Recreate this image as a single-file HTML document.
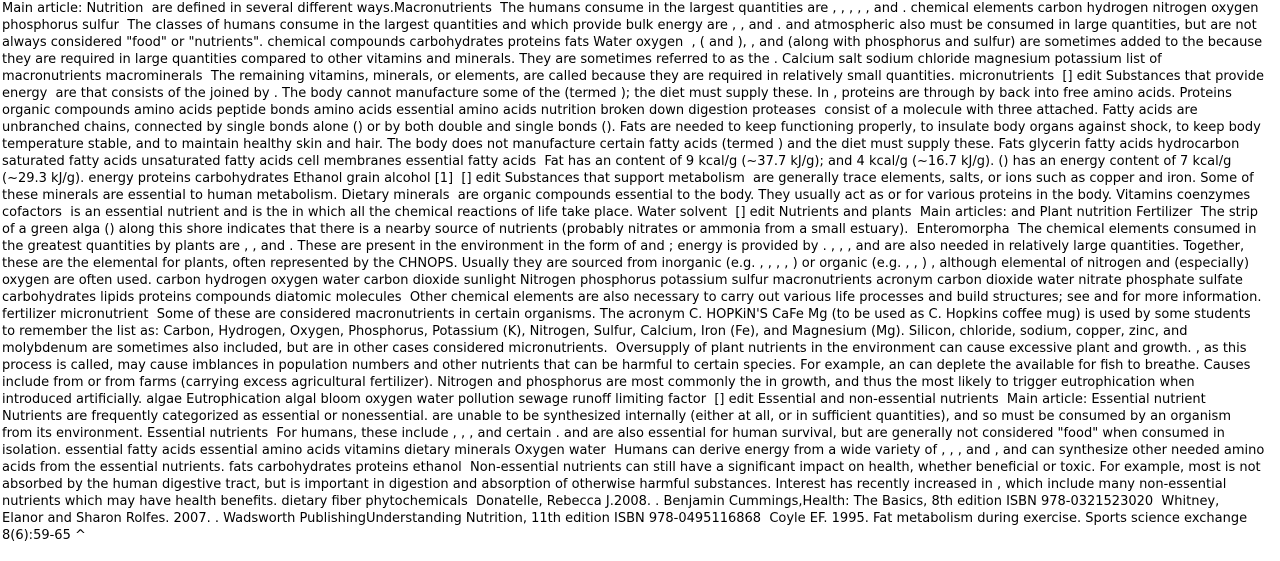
<!DOCTYPE html>
<html><head><meta charset="utf-8"><style>
html,body{margin:0;padding:0;background:#fff;overflow:hidden;}
body{font-family:"DejaVu Sans",sans-serif;font-size:13px;line-height:17px;color:#000;padding:0 2px;}
div{white-space:pre;}
</style></head><body>
<div>Main article: Nutrition  are defined in several different ways.Macronutrients  The humans consume in the largest quantities are , , , , , and . chemical elements carbon hydrogen nitrogen oxygen</div>
<div>phosphorus sulfur  The classes of humans consume in the largest quantities and which provide bulk energy are , , and . and atmospheric also must be consumed in large quantities, but are not</div>
<div>always considered "food" or "nutrients". chemical compounds carbohydrates proteins fats Water oxygen  , ( and ), , and (along with phosphorus and sulfur) are sometimes added to the because</div>
<div>they are required in large quantities compared to other vitamins and minerals. They are sometimes referred to as the . Calcium salt sodium chloride magnesium potassium list of</div>
<div>macronutrients macrominerals  The remaining vitamins, minerals, or elements, are called because they are required in relatively small quantities. micronutrients  [] edit Substances that provide</div>
<div>energy  are that consists of the joined by . The body cannot manufacture some of the (termed ); the diet must supply these. In , proteins are through by back into free amino acids. Proteins</div>
<div>organic compounds amino acids peptide bonds amino acids essential amino acids nutrition broken down digestion proteases  consist of a molecule with three attached. Fatty acids are</div>
<div>unbranched chains, connected by single bonds alone () or by both double and single bonds (). Fats are needed to keep functioning properly, to insulate body organs against shock, to keep body</div>
<div>temperature stable, and to maintain healthy skin and hair. The body does not manufacture certain fatty acids (termed ) and the diet must supply these. Fats glycerin fatty acids hydrocarbon</div>
<div>saturated fatty acids unsaturated fatty acids cell membranes essential fatty acids  Fat has an content of 9 kcal/g (~37.7 kJ/g); and 4 kcal/g (~16.7 kJ/g). () has an energy content of 7 kcal/g</div>
<div>(~29.3 kJ/g). energy proteins carbohydrates Ethanol grain alcohol [1]  [] edit Substances that support metabolism  are generally trace elements, salts, or ions such as copper and iron. Some of</div>
<div>these minerals are essential to human metabolism. Dietary minerals  are organic compounds essential to the body. They usually act as or for various proteins in the body. Vitamins coenzymes</div>
<div>cofactors  is an essential nutrient and is the in which all the chemical reactions of life take place. Water solvent  [] edit Nutrients and plants  Main articles: and Plant nutrition Fertilizer  The strip</div>
<div>of a green alga () along this shore indicates that there is a nearby source of nutrients (probably nitrates or ammonia from a small estuary).  Enteromorpha  The chemical elements consumed in</div>
<div>the greatest quantities by plants are , , and . These are present in the environment in the form of and ; energy is provided by . , , , and are also needed in relatively large quantities. Together,</div>
<div>these are the elemental for plants, often represented by the CHNOPS. Usually they are sourced from inorganic (e.g. , , , , ) or organic (e.g. , , ) , although elemental of nitrogen and (especially)</div>
<div>oxygen are often used. carbon hydrogen oxygen water carbon dioxide sunlight Nitrogen phosphorus potassium sulfur macronutrients acronym carbon dioxide water nitrate phosphate sulfate</div>
<div>carbohydrates lipids proteins compounds diatomic molecules  Other chemical elements are also necessary to carry out various life processes and build structures; see and for more information.</div>
<div>fertilizer micronutrient  Some of these are considered macronutrients in certain organisms. The acronym C. HOPKiN'S CaFe Mg (to be used as C. Hopkins coffee mug) is used by some students</div>
<div>to remember the list as: Carbon, Hydrogen, Oxygen, Phosphorus, Potassium (K), Nitrogen, Sulfur, Calcium, Iron (Fe), and Magnesium (Mg). Silicon, chloride, sodium, copper, zinc, and</div>
<div>molybdenum are sometimes also included, but are in other cases considered micronutrients.  Oversupply of plant nutrients in the environment can cause excessive plant and growth. , as this</div>
<div>process is called, may cause imblances in population numbers and other nutrients that can be harmful to certain species. For example, an can deplete the available for fish to breathe. Causes</div>
<div>include from or from farms (carrying excess agricultural fertilizer). Nitrogen and phosphorus are most commonly the in growth, and thus the most likely to trigger eutrophication when</div>
<div>introduced artificially. algae Eutrophication algal bloom oxygen water pollution sewage runoff limiting factor  [] edit Essential and non-essential nutrients  Main article: Essential nutrient</div>
<div>Nutrients are frequently categorized as essential or nonessential. are unable to be synthesized internally (either at all, or in sufficient quantities), and so must be consumed by an organism</div>
<div>from its environment. Essential nutrients  For humans, these include , , , and certain . and are also essential for human survival, but are generally not considered "food" when consumed in</div>
<div>isolation. essential fatty acids essential amino acids vitamins dietary minerals Oxygen water  Humans can derive energy from a wide variety of , , , and , and can synthesize other needed amino</div>
<div>acids from the essential nutrients. fats carbohydrates proteins ethanol  Non-essential nutrients can still have a significant impact on health, whether beneficial or toxic. For example, most is not</div>
<div>absorbed by the human digestive tract, but is important in digestion and absorption of otherwise harmful substances. Interest has recently increased in , which include many non-essential</div>
<div>nutrients which may have health benefits. dietary fiber phytochemicals  Donatelle, Rebecca J.2008. . Benjamin Cummings,Health: The Basics, 8th edition ISBN 978-0321523020  Whitney,</div>
<div>Elanor and Sharon Rolfes. 2007. . Wadsworth PublishingUnderstanding Nutrition, 11th edition ISBN 978-0495116868  Coyle EF. 1995. Fat metabolism during exercise. Sports science exchange</div>
<div>8(6):59-65 ^</div>
</body></html>
